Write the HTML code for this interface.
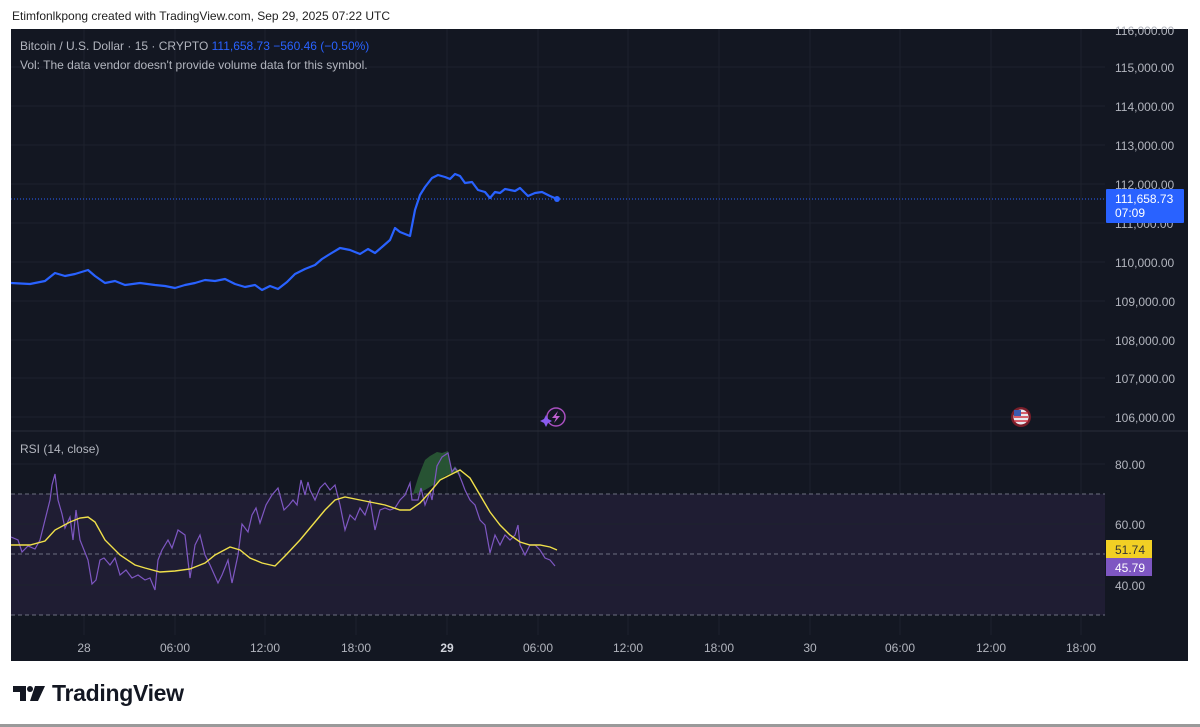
<!DOCTYPE html>
<html><head><meta charset="utf-8"><style>
html,body{margin:0;padding:0;background:#fff;width:1200px;height:727px;overflow:hidden;font-family:"Liberation Sans",Arial,sans-serif}
.hdr{position:absolute;left:12px;top:9px;font-size:12px;color:#222}
svg{position:absolute;left:0;top:0}
.logo{position:absolute;left:52px;top:680px;font-size:23px;font-weight:bold;color:#131722;letter-spacing:-0.3px}
.bl{position:absolute;left:0;top:724px;width:1200px;height:3px;background:#9a9a9a}
</style></head><body>
<div class="hdr">Etimfonlkpong created with TradingView.com, Sep 29, 2025 07:22 UTC</div>
<svg width="1200" height="727" xmlns="http://www.w3.org/2000/svg" font-family="Liberation Sans, Arial, sans-serif">
<rect x="11" y="29" width="1177" height="632" fill="#131722"/>
<g stroke="#1e222d" stroke-width="1">
<line x1="11" x2="1105" y1="67" y2="67"/><line x1="11" x2="1105" y1="106" y2="106"/><line x1="11" x2="1105" y1="145" y2="145"/><line x1="11" x2="1105" y1="184" y2="184"/><line x1="11" x2="1105" y1="223" y2="223"/><line x1="11" x2="1105" y1="262" y2="262"/><line x1="11" x2="1105" y1="301" y2="301"/><line x1="11" x2="1105" y1="340" y2="340"/><line x1="11" x2="1105" y1="378" y2="378"/><line x1="11" x2="1105" y1="417" y2="417"/>
<line x1="84" x2="84" y1="29" y2="635"/><line x1="175" x2="175" y1="29" y2="635"/><line x1="265" x2="265" y1="29" y2="635"/><line x1="356" x2="356" y1="29" y2="635"/><line x1="447" x2="447" y1="29" y2="635"/><line x1="538" x2="538" y1="29" y2="635"/><line x1="628" x2="628" y1="29" y2="635"/><line x1="719" x2="719" y1="29" y2="635"/><line x1="810" x2="810" y1="29" y2="635"/><line x1="900" x2="900" y1="29" y2="635"/><line x1="991" x2="991" y1="29" y2="635"/><line x1="1081" x2="1081" y1="29" y2="635"/>
</g>
<line x1="11" x2="1188" y1="431" y2="431" stroke="#2a2e39"/>
<rect x="11" y="494" width="1094" height="121" fill="#1f1d33"/>
<g stroke="#1e222d"><line x1="11" x2="1105" y1="464" y2="464"/><line x1="11" x2="1105" y1="524" y2="524"/><line x1="11" x2="1105" y1="585" y2="585"/></g>
<g stroke="#6e7080" stroke-dasharray="4,3"><line x1="11" x2="1105" y1="494" y2="494"/><line x1="11" x2="1105" y1="554" y2="554"/><line x1="11" x2="1105" y1="615" y2="615"/></g>
<line x1="11" x2="1105" y1="199" y2="199" stroke="#2962ff" stroke-dasharray="1,2"/>
<polyline fill="none" stroke="#2962ff" stroke-width="2.2" stroke-linejoin="round" points="11,283 30,284 45,281 55,273 65,276 75,274 88,270 95,276 105,283 115,281 125,285 140,283 155,285 165,286 175,288 185,285 195,283 205,280 215,281 225,279 235,284 245,287 255,285 262,290 270,286 278,289 287,282 295,274 305,269 315,265 322,259 330,254 340,248 350,250 360,254 368,249 375,253 382,247 390,240 395,228 400,232 410,236 415,210 420,195 425,187 432,178 438,175 445,177 450,179 455,174 460,176 465,183 472,182 478,190 485,192 490,198 495,192 500,193 505,189 510,190 515,191 520,188 528,196 535,193 542,192 550,196 557,199"/>
<circle cx="557" cy="199" r="3" fill="#2962ff"/>
<polygon fill="#2a5a35" opacity="0.9" points="413,494 418,478 421,470 425,460 430,456 437,452 442,453 448,451 452,470 455,466 458,470 462,477 455,472 445,476 435,484 425,490 418,493"/>
<polyline fill="none" stroke="#7e57c2" stroke-width="1.2" points="11,537 18,540 22,552 28,546 35,549 40,540 45,520 50,500 52,485 55,474 58,500 62,514 65,528 70,517 73,540 76,510 80,540 88,560 92,584 96,580 100,560 104,558 110,565 115,558 120,575 126,570 132,578 138,575 145,580 150,578 155,590 158,560 162,550 168,540 172,548 178,530 185,535 190,578 195,545 200,535 205,555 210,565 218,583 222,575 228,560 232,583 238,555 242,524 248,532 252,515 256,508 260,523 266,505 272,495 278,488 284,510 289,505 293,500 297,505 301,480 305,495 308,482 310,490 315,500 320,488 325,483 330,490 335,485 340,505 345,530 350,515 355,520 360,508 365,515 370,500 375,530 380,510 385,508 390,510 395,508 400,500 405,495 410,483 412,500 418,500 421,488 425,505 430,492 432,500 437,466 442,457 448,453 452,472 455,468 458,472 462,482 465,490 470,500 475,505 480,520 485,525 490,553 495,535 500,545 505,535 510,540 515,535 518,525 520,545 525,555 530,545 535,545 540,550 545,558 550,560 555,566"/>
<polyline fill="none" stroke="#f0e04a" stroke-width="1.4" points="11,545 30,545 45,541 55,530 70,522 80,518 88,517 95,522 105,540 120,555 135,565 145,568 160,572 175,571 190,569 205,563 215,555 230,547 240,550 250,558 262,563 275,566 285,556 300,540 310,528 325,510 335,500 345,497 360,500 375,503 385,505 400,510 410,510 420,503 430,492 440,480 450,475 460,470 470,478 480,495 490,512 500,525 510,535 520,542 530,545 540,545 550,547 557,550"/>
<circle cx="556" cy="417" r="9" fill="none" stroke="#a84fbf" stroke-width="1.5"/>
<path d="M558 411 L552 418 L556 418 L554 423 L560 416 L556 416 Z" fill="#c060d0"/>
<path d="M546 417 L548 421 L552 423 L548 425 L546 429 L544 425 L540 423 L544 421 Z" fill="#8a5cf0" transform="translate(0,-2)"/>
<circle cx="1021" cy="417" r="10" fill="#7a1e2a"/><circle cx="1021" cy="417" r="7.5" fill="#e8e8ee"/>
<path d="M1014 413 h14 M1014 417 h14 M1014 421 h14" stroke="#d03040" stroke-width="1.6"/>
<rect x="1014" y="410" width="7" height="6" fill="#3a5ab0"/>
<g fill="#b2b5be" font-size="12">
<text x="1115" y="35">116,000.00</text><text x="1115" y="72">115,000.00</text><text x="1115" y="111">114,000.00</text><text x="1115" y="150">113,000.00</text><text x="1115" y="189">112,000.00</text><text x="1115" y="228">111,000.00</text><text x="1115" y="267">110,000.00</text><text x="1115" y="306">109,000.00</text><text x="1115" y="345">108,000.00</text><text x="1115" y="383">107,000.00</text><text x="1115" y="422">106,000.00</text>
<text x="1115" y="469">80.00</text><text x="1115" y="529">60.00</text><text x="1115" y="590">40.00</text>
</g>
<rect x="1106" y="189" width="78" height="34" fill="#2962ff" rx="1"/>
<text x="1115" y="203" fill="#fff" font-size="12">111,658.73</text><text x="1115" y="217" fill="#fff" font-size="12">07:09</text>
<rect x="1106" y="540" width="46" height="18" fill="#f2d024"/><text x="1115" y="554" fill="#333" font-size="12">51.74</text>
<rect x="1106" y="558" width="46" height="18" fill="#7e57c2"/><text x="1115" y="572" fill="#fff" font-size="12">45.79</text>
<g fill="#b2b5be" font-size="12" text-anchor="middle">
<text x="84" y="652">28</text><text x="175" y="652">06:00</text><text x="265" y="652">12:00</text><text x="356" y="652">18:00</text><text x="447" y="652" font-weight="bold" fill="#d1d4dc">29</text><text x="538" y="652">06:00</text><text x="628" y="652">12:00</text><text x="719" y="652">18:00</text><text x="810" y="652">30</text><text x="900" y="652">06:00</text><text x="991" y="652">12:00</text><text x="1081" y="652">18:00</text>
</g>
<text x="20" y="50" fill="#b2b5be" font-size="12">Bitcoin / U.S. Dollar · 15 · CRYPTO <tspan fill="#2962ff">111,658.73 −560.46 (−0.50%)</tspan></text>
<text x="20" y="69" fill="#b2b5be" font-size="12">Vol: The data vendor doesn't provide volume data for this symbol.</text>
<text x="20" y="453" fill="#b2b5be" font-size="12">RSI (14, close)</text>
<path d="M13 686 h13 v15 h-6 v-9 h-7 Z" fill="#131722"/><circle cx="30" cy="689" r="3" fill="#131722"/><path d="M35 686 h10 l-7 15 h-8 Z" fill="#131722"/>
</svg>
<div class="logo">TradingView</div>
<div class="bl"></div>
</body></html>
